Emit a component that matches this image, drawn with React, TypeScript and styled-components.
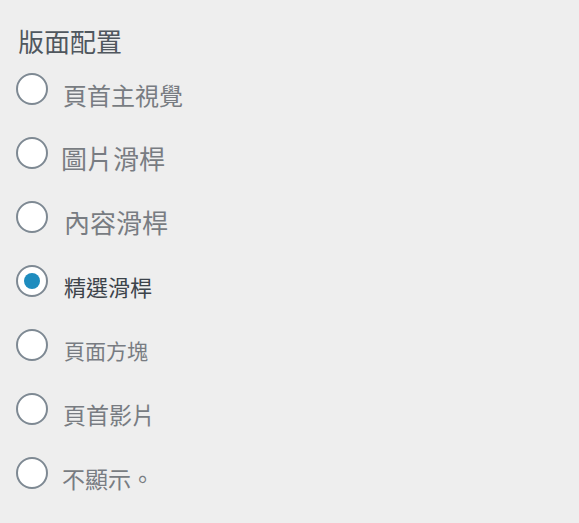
import styled, { createGlobalStyle } from "styled-components"

const GlobalStyle = createGlobalStyle`
    html, body {
        margin: 0;
        padding: 0;
        background: #eeeeee;
    }
    body {
        font-family: "Noto Sans CJK TC", "Noto Sans", sans-serif;
    }
`

const Panel = styled.div`
    width: 579px;
    height: 523px;
    box-sizing: border-box;
    padding: 23px 16px 0 16px;
    background: #eeeeee;
`

const Title = styled.h3`
    margin: 0 0 14px 2px;
    font-size: 26px;
    font-weight: 400;
    line-height: 36px;
    color: #50575e;
`

const OptionList = styled.div`
    display: flex;
    flex-direction: column;
`

const OptionRow = styled.label`
    display: flex;
    align-items: flex-start;
    height: 64px;
    cursor: pointer;
`

const Radio = styled.span<{ $checked?: boolean }>`
    flex: none;
    width: 32px;
    height: 32px;
    box-sizing: border-box;
    border: 2px solid #7e8993;
    border-radius: 50%;
    background: #ffffff;
    display: flex;
    align-items: center;
    justify-content: center;

    &::after {
        content: "";
        display: ${(p) => (p.$checked ? "block" : "none")};
        width: 16px;
        height: 16px;
        border-radius: 50%;
        background: #1e8cbe;
    }
`

const Label = styled.span<{ $size: number; $indent: number; $checked?: boolean }>`
    margin-left: ${(p) => p.$indent}px;
    margin-top: ${(p) => 22 - p.$size * 0.72}px;
    font-size: ${(p) => p.$size}px;
    line-height: ${(p) => p.$size * 1.4}px;
    color: ${(p) => (p.$checked ? "#3c434a" : "#787c82")};
    white-space: pre;
`

const options = [
    { text: "頁首主視覺", size: 24, indent: 15 },
    { text: "圖片滑桿", size: 26, indent: 13 },
    { text: "內容滑桿", size: 26, indent: 16 },
    { text: "精選滑桿", size: 22, indent: 16, checked: true },
    { text: "頁面方塊", size: 21, indent: 16 },
    { text: "頁首影片", size: 23, indent: 15 },
    { text: "不顯示。", size: 23, indent: 14 },
]

const App = () => {
    return (
        <>
            <GlobalStyle />
            <Panel>
                <Title>版面配置</Title>
                <OptionList>
                    {options.map((o) => (
                        <OptionRow key={o.text}>
                            <Radio $checked={o.checked} />
                            <Label $size={o.size} $indent={o.indent} $checked={o.checked}>
                                {o.text}
                            </Label>
                        </OptionRow>
                    ))}
                </OptionList>
            </Panel>
        </>
    )
}

export default App
